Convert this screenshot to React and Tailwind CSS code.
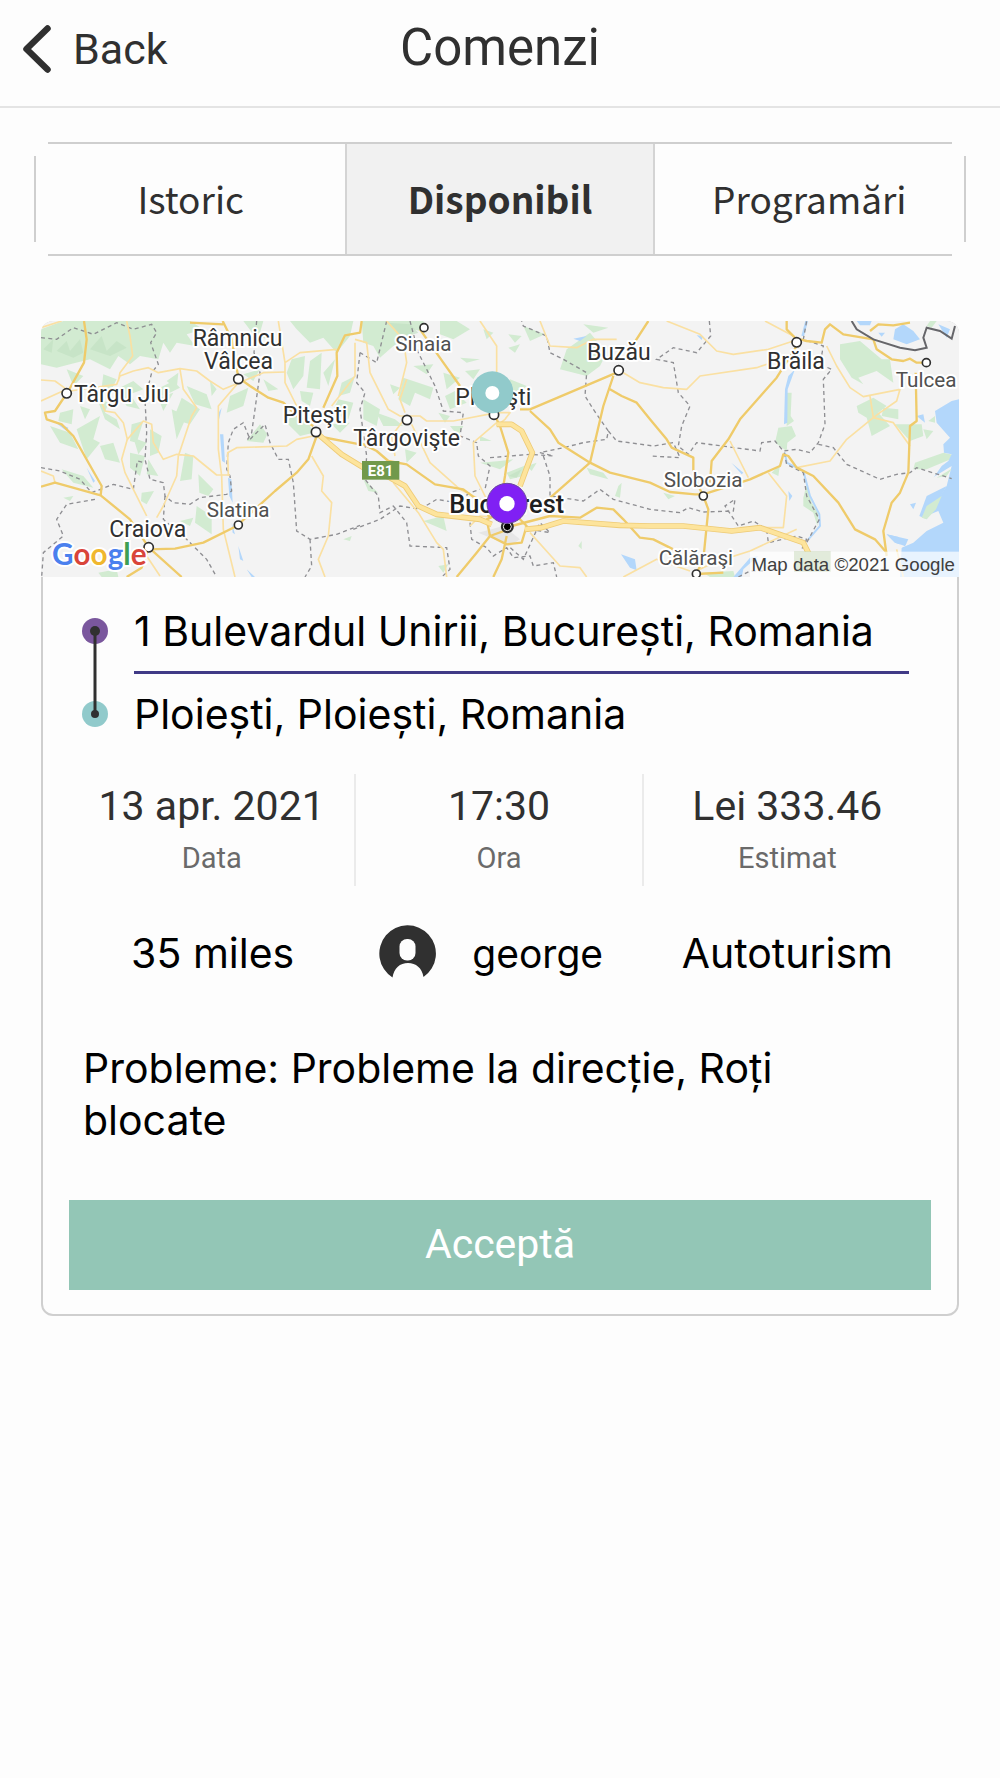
/* src/pages/OrdersPage.jsx */
import { useState } from 'react'

const tabs = ['Istoric', 'Disponibil', 'Programări']

const order = {
  from: '1 Bulevardul Unirii, București, Romania',
  to: 'Ploiești, Ploiești, Romania',
  stats: [
    { value: '13 apr. 2021', label: 'Data' },
    { value: '17:30', label: 'Ora' },
    { value: 'Lei 333.46', label: 'Estimat' },
  ],
  distance: '35 miles',
  client: 'george',
  vehicle: 'Autoturism',
  problems: 'Probleme la direcție, Roți blocate',
}

// x, y is the left baseline of the label, cx, cy the city dot
const cities = [
  { name: 'Râmnicu', x: 488, y: 109 },
  { name: 'Vâlcea', x: 522, y: 179, cx: 625, cy: 209 },
  { name: 'Târgu Jiu', x: 132, y: 278, cx: 110, cy: 252 },
  { name: 'Piteşti', x: 758, y: 340, cx: 858, cy: 368 },
  { name: 'Craiova', x: 238, y: 684, cx: 356, cy: 714 },
  { name: 'Slatina', x: 530, y: 622, cx: 625, cy: 647, small: true },
  { name: 'Sinaia', x: 1096, y: 126, cx: 1182, cy: 55, small: true },
  { name: 'Târgovişte', x: 970, y: 411, cx: 1131, cy: 332 },
  { name: 'Ploieşti', x: 1276, y: 286, cx: 1392, cy: 316 },
  { name: 'Buzău', x: 1671, y: 153, cx: 1766, cy: 183 },
  { name: 'Brăila', x: 2211, y: 178, cx: 2300, cy: 99 },
  { name: 'Tulcea', x: 2597, y: 232, cx: 2689, cy: 160, small: true },
  { name: 'Slobozia', x: 1901, y: 533, cx: 2020, cy: 560, small: true },
  { name: 'Călăraşi', x: 1886, y: 767, cx: 1999, cy: 794, small: true },
]

const BackIcon = () => (
  <svg viewBox="0 0 28 48" className="h-12 w-7" fill="none" stroke="#303030" strokeWidth="6.500" strokeLinecap="round" strokeLinejoin="round" aria-hidden="true">
    <path d="M24.500 3.500L3.500 24l21 20.500" />
  </svg>
)

const UserIcon = () => (
  <svg viewBox="0 0 57 54" className="h-[54px] w-[57px] mb-1 shrink-0" aria-hidden="true">
    <path fill="#303030" d="M13.500 52.500A28.300 28.300 0 1 1 44.500 52C43 43 37 38 29 38S15 43 13.500 52.500Z" />
    <rect x="20.500" y="14" width="16" height="21.500" rx="7.500" fill="#fdfdfd" />
  </svg>
)

const RouteMap = () => (
  <svg viewBox="33 35 2754 768" className="block w-full rounded-t-xl" role="img" aria-label="Bucharest - Ploieşti" fontFamily="Roboto, sans-serif">
    <rect x="33" y="35" width="2754" height="768" fill="#f3f3f3" />

    {/* forests */}
    <g fill="#d2ebd1">
      <path d="M33 60L100 35H480L520 60L470 75L495 110L440 100L420 130L400 100L385 150L330 140L300 165L265 140L240 180L180 150L120 165L80 175L33 165Z" />
      <path d="M640 35H700L690 70L740 100L670 75ZM780 35H970L960 80L920 130L880 85L840 100L800 60Z" />
      <path d="M110 180L160 200L130 230ZM220 195L260 210L240 250L215 235ZM260 240L310 215L340 240L300 255L330 300L290 290ZM370 245L430 215L450 235L400 260ZM410 215L445 190L440 240ZM385 265L430 250L400 305ZM470 230L530 255L545 300L495 285ZM455 265L510 300L480 345L430 330ZM425 300L470 320L440 390ZM540 215L560 240L545 260Z" />
      <path d="M90 310L130 300L125 345L85 335ZM60 350L120 370L145 420L90 400ZM140 360L210 320L190 390L210 400L170 450ZM150 290L180 300L165 330ZM200 265L235 280L225 310L260 330L270 360L225 330ZM210 410L250 400L270 460L225 450ZM305 345L340 335L320 400L300 395ZM360 360L395 380L385 430L360 440ZM300 430L345 440L330 500L300 475ZM310 385L350 400L325 435ZM465 430L490 440L485 510L450 515ZM355 450L385 500L350 495Z" />
      <path d="M95 480L160 500L190 535L130 520ZM100 565L130 560L120 575ZM335 550L372 545L350 585L333 575ZM505 495L550 540L535 560L508 550ZM500 590L545 620L545 675L495 640ZM450 635L490 625L480 650ZM205 790L260 780L265 803H215ZM940 690L965 680L960 695Z" />
      <path d="M600 260L655 235L640 290L590 310ZM640 195L690 180L670 215ZM700 210L745 240L715 245ZM690 345L712 375L700 400L650 395ZM785 150L825 140L820 200L790 240L770 190ZM840 155L875 130L870 240L830 235ZM880 190L915 150L895 230ZM810 245L850 250L840 290L815 275ZM790 310L830 330L850 370L810 380L770 340ZM935 220L975 200L960 250L925 260ZM925 270L970 280L955 330L905 310ZM905 345L960 340L930 370Z" />
      <path d="M995 35H1180L1190 70L1150 60L1140 100L1090 110L1050 145L1030 110L1000 100ZM1230 35H1280L1320 60L1270 90L1230 75ZM1150 170L1210 165L1190 195ZM1290 145L1350 150L1310 160ZM1360 60L1390 70L1370 90ZM1435 75L1475 80L1455 100ZM1435 115L1470 105L1455 130ZM1480 50L1545 75L1500 95Z" />
      <path d="M1120 205L1210 235L1200 270L1155 250L1140 290L1105 270ZM1080 225L1110 235L1090 255ZM1000 270L1050 300L1040 350L1000 330ZM1040 310L1095 330L1120 350L1060 350ZM1240 190L1290 205L1250 240ZM1245 260L1275 245L1310 280L1260 300ZM1225 310L1260 320L1245 340ZM1260 350L1300 350L1285 380ZM1125 420L1160 430L1130 460ZM1350 380L1385 395L1350 395ZM1440 210L1490 230L1470 250L1430 240ZM1305 185L1350 180L1330 210Z" />
      <path d="M1610 120L1680 70L1730 130L1710 170L1670 200L1590 180ZM1660 45L1735 55L1690 70ZM1350 460L1410 455L1450 450L1410 480L1380 470ZM1430 490L1495 465L1480 500L1440 510ZM1490 470L1520 460L1505 485ZM1670 475L1720 490L1735 510L1680 495ZM1765 530L1775 520L1770 565L1755 560ZM1645 710L1655 695L1655 720ZM1180 635L1240 620L1250 665ZM1225 770L1255 765L1240 790ZM1000 510L1045 550L1015 545Z" />
      <path d="M2430 105L2490 95L2555 150L2580 150L2590 220L2540 185L2485 205L2500 225L2465 205L2430 150ZM2480 290L2530 265L2570 290L2545 310L2580 350L2525 380L2510 325L2485 310ZM2560 295L2605 300L2605 330L2555 320ZM2595 345L2675 345L2680 380L2640 395ZM2680 360L2710 365L2690 390ZM2695 335L2715 320L2715 340ZM2270 250H2285L2282 320L2292 335L2270 350ZM2245 355L2285 350L2298 380L2272 400L2270 425L2235 400ZM2225 490L2250 465L2245 500ZM2320 565L2330 525L2345 580L2365 610L2362 650L2350 610L2320 590ZM2655 460L2740 430L2785 440L2690 480L2650 480ZM1900 550L1935 560L1915 570ZM2020 790L2110 785L2115 803H2040ZM2700 35H2720L2705 55L2690 50Z" />
    </g>
    <g fill="#bfe0bf">
      <path d="M80 125L110 95L120 125L150 90L160 130L130 145ZM180 120L215 80L230 125L260 95L290 115L240 140ZM40 120L70 90L65 130ZM1070 40L1140 45L1165 70L1120 85ZM1435 500L1475 480L1460 505Z" opacity=".6" />
    </g>

    {/* water */}
    <g fill="#b3d7fb">
      <path d="M2787 270L2765 275L2715 305L2720 340L2760 385L2740 405L2742 430L2765 435L2755 455L2735 470L2700 520L2670 600L2675 625L2725 605L2740 640L2690 665L2650 700L2615 715L2610 803H2787Z" />
      <path d="M2480 35H2525L2520 48H2490ZM2595 60L2620 45L2650 65L2670 90L2630 105L2590 90ZM2545 70L2565 70L2555 82ZM2725 45L2760 60L2750 85ZM2660 320L2680 315L2685 340ZM2570 675L2635 690L2625 710L2595 700ZM2640 585L2658 580L2650 600ZM2295 180L2275 200L2265 240L2262 345L2272 340L2273 240ZM2275 545L2287 560L2278 575ZM2110 803L2160 745L2185 740L2140 780L2135 803ZM1773 735L1815 750L1820 783L1800 775Z" />
      <path d="M575 295L566 310L565 340ZM570 375L580 375L585 460L576 455ZM594 505L604 510L608 580L598 560ZM605 640L615 675L608 670ZM625 710L640 755L630 750ZM2104 460L2140 490L2135 495ZM2000 78L2020 80L2015 92ZM1630 88L1670 80L1650 95ZM650 780L675 803H665ZM70 335L115 355L110 365ZM170 475L195 515L190 520Z" />
      <path d="M2265 430L2270 460L2320 485L2340 560L2368 615L2370 650L2335 690" fill="none" stroke="#b3d7fb" strokeWidth="6" />
      <path d="M2330 35L2318 80" fill="none" stroke="#b3d7fb" strokeWidth="8" />
    </g>
    {/* delta gap between the lagoon and the sea */}
    <path d="M2640 550L2700 510L2765 470L2750 530L2680 640L2700 655L2640 690L2610 720L2600 620Z" fill="#f3f3f3" />
    <path d="M2750 530L2722 580L2690 630L2668 620L2690 560Z" fill="#b3d7fb" />
    <path d="M2675 625L2690 590L2735 560L2718 600L2690 630ZM2720 505L2765 478L2750 500Z" fill="#d2ebd1" />
    <path d="M2640 585L2658 580L2650 600ZM2570 675L2635 690L2625 710L2595 700Z" fill="#b3d7fb" />
    <path d="M1345 670L1420 650L1470 690L1440 710Z" fill="#e6e6e6" />

    {/* county borders */}
    <g fill="none" stroke="#8e8e92" strokeWidth="4" strokeDasharray="12 10">
      <path d="M33 85L80 90L130 55L190 75L260 40L310 60L365 45L380 70L362 100L385 165L365 190L345 270L350 370L345 450L360 510L400 520L405 560L430 580L480 585L510 565L590 555L605 545L600 500L590 480L595 400L610 360L640 340L660 390L705 345L720 400L745 450H775L790 520L800 665L840 690L920 675L990 648" />
      <path d="M33 475L90 485L150 510L185 550L250 525L310 540L322 455L345 460M195 570L110 585L80 630L100 680L40 730L35 803M405 560L400 630L470 690L530 750L560 803M840 690L845 770L825 803M680 35L672 130L690 190L675 300L665 370L650 395M990 130L980 220L1005 250L990 300L1010 440L1005 510L1045 560L1050 610L1090 590L1130 640L1140 710L1250 715L1260 780L1235 803" />
      <path d="M1070 35L1040 160L990 130M1140 35L1165 130L1215 230L1240 305L1300 310L1290 380L1340 400L1345 440L1380 470L1365 540M1380 445L1500 435L1570 440L1530 430L1600 415L1660 400L1730 390L1735 365L1690 300L1665 260L1670 190L1600 150L1560 130L1550 80L1480 50L1475 35" />
      <path d="M1735 365L1760 395L1870 410L1930 400L1950 445L1860 440M1540 440L1560 500L1560 560L1660 575L1710 540L1750 570L1860 600L1950 610L1975 595L2020 608L2110 605L2115 570L2085 590L2125 650L2170 635L2210 660L2215 700L2300 680L2330 690L2315 720" />
      <path d="M2038 35L2042 80L2000 130L1930 115L1880 150L1930 160L1945 250L1980 290L1955 350L1945 410L1975 435L2000 400L2190 425L2195 400L2235 395L2260 425L2300 420L2340 430L2365 400L2385 345L2380 210L2405 180L2370 165L2380 110L2320 90L2330 35" />
      <path d="M2365 405L2410 415L2450 465L2550 510L2600 495L2640 490L2660 475L2765 508M2263 430L2270 465L2320 490L2330 560L2368 630L2330 700M970 660L1050 630L1110 590L1170 600L1220 570L1280 580L1320 550L1350 540M1320 640L1325 690L1370 715L1390 740L1430 715L1450 745L1500 740L1510 770L1570 760L1580 803M1500 660L1560 670L1530 640L1480 750L1435 710M2125 803L2160 785H2200" />
    </g>

    {/* minor roads */}
    <g fill="none" stroke="#fae0a2" strokeWidth="5" strokeLinejoin="round">
      <path d="M33 55L95 35M33 212L75 215L110 240L33 275M120 245L260 225L270 200L310 185L355 175L385 190L450 178L500 185L540 215L580 240L640 215L700 190L765 188M290 35L300 80L308 140L270 190L265 215M215 280L225 305L255 310L280 340L292 390L340 335L365 345L370 400L400 450L440 435L490 440L560 497H600M450 180L460 240L500 295L485 320L445 440L440 500L400 590L380 625" />
      <path d="M292 390L275 450L285 490L350 620M625 220L565 290L565 420L575 500L580 660L615 803M595 500L593 430L620 415L770 410L800 390L850 380M745 35L765 160L765 220L800 290L810 325M765 160L810 130L920 120M845 440L880 500L875 545L905 580L895 680L865 750L885 803M975 100V200L905 290M350 740L390 800M33 485L70 500L75 520" />
      <path d="M975 90L1010 100L1020 190L1075 300L1110 320L1170 320L1190 335L1270 335L1400 310L1440 310L1425 330L1400 350M1130 210L1110 270L1125 310M1070 35L1120 90L1130 160L1105 260M1400 340L1330 400L1335 500L1370 570M1130 320L1085 380L1095 440M1350 35L1400 110L1400 190M1145 345L1200 460L1290 540L1370 580M1090 520L1165 610L1220 700L1240 720L1250 803" />
      <path d="M1530 35L1560 110L1640 115L1690 90H1760M1780 190L1830 220L1900 235L1970 240L2010 200L2180 175L2240 155M1910 35L2010 75L2060 125L2110 135L2215 120L2290 95M1500 670L1590 770L1650 775L1670 803M2205 35L2290 80M2390 110L2420 170L2460 235L2500 262L2610 240L2600 275L2550 310L2530 325L2520 260M2300 475L2400 455L2450 390L2530 325L2590 340L2640 410M2100 395L2155 505M2215 490L2270 560L2260 655H2130M2300 660L2160 725L2050 760L2010 780M2600 720L2620 803M1320 650L1350 620L1400 625M1780 803L1880 750L1980 785" />
    </g>

    {/* main roads */}
    <g fill="none" stroke="#efcb6a" strokeWidth="7" strokeLinejoin="round">
      <path d="M162 35L170 90L162 160L115 245L75 305L45 310L50 330L95 345L130 380L215 530L212 558L75 520L33 532M212 558L300 630L356 714L455 803M356 714L335 775L290 803M356 720L435 718L520 700L620 650L735 545L800 490L835 450L860 380L990 405M578 35L605 90L625 205L660 230L715 265L760 280L800 320L850 350M480 40L580 45M990 70L945 78L920 130L922 200L880 295" />
      <path d="M990 72L995 35M990 400L1040 425L1075 455L1130 465L1215 525L1300 540L1340 570L1380 625M1170 60L1240 160L1290 230M1390 310L1410 350L1435 430L1425 500L1420 530M1470 300L1500 300L1760 190M1805 150L1800 120L1855 35M1500 305L1560 360L1585 400L1680 460L1740 490L1860 520L1920 548L1995 555L2020 555L2160 510L2250 470L2260 435L2275 440L2300 475L2350 500L2425 580L2475 660L2535 690L2570 730" />
      <path d="M1750 200L1720 290L1680 460L1555 570M1740 240L1775 260L1820 280L1860 330L1910 390L1925 415L1990 445V500L2020 560L2035 600L2020 750L1999 794M2300 110L2240 205L2130 330L2095 390L2045 455L2040 520M2300 90L2270 60V35M2310 90L2330 95L2375 100L2385 60L2400 45L2440 75L2530 90L2540 120L2585 150L2620 155L2640 148L2660 160H2685M2657 190L2660 335L2640 350L2635 490L2610 550L2585 580L2560 665L2570 740" />
      <path d="M1380 680L1340 730L1280 803M1430 680L1415 750L1390 803M1445 650L1560 620L1650 625L1700 595L1750 600L1780 630L1830 685L1870 690L1930 720M1435 660L1380 680L1430 705L1475 700L1490 650L1440 600L1370 630L1380 680M2520 65L2545 45L2590 48L2640 40M1999 794L2080 790" />
    </g>
    <g fill="none" stroke="#eecb76" strokeWidth="17" strokeLinejoin="round">
      <path d="M865 375L935 435L1000 475L1080 505L1125 530L1165 590L1220 615L1350 630L1385 645M1485 660L1535 655L1600 635L1770 648L1860 650L1960 650L2105 665L2190 655L2320 700L2340 740M1400 345L1445 345L1475 365L1507 430L1470 530" />
    </g>
    <path fill="none" stroke="#fde49c" strokeWidth="12" strokeLinejoin="round" d="M865 375L935 435L1000 475L1080 505L1125 530L1165 590L1220 615L1350 630L1385 645M1485 660L1535 655L1600 635L1770 648L1860 650L1960 650L2105 665L2190 655L2320 700L2340 740M1400 345L1445 345L1475 365L1507 430L1470 530" />

    {/* state border */}
    <path d="M2465 35L2480 60L2530 90L2610 115L2655 123L2690 115L2680 85L2690 55L2730 65L2765 88L2775 50" fill="none" stroke="#66666a" strokeWidth="6" />

    {/* city dots and labels */}
    <g fill="#fff" stroke="#303030" strokeWidth="5">
      {cities.filter(c => c.cx).map(c => (
        <circle key={c.name} cx={c.cx} cy={c.cy} r={c.small ? 12 : 14} />
      ))}
      <circle cx="1432" cy="652" r="17" fill="#000" />
      <circle cx="1432" cy="652" r="12" fill="none" stroke="#fff" strokeWidth="3" />
    </g>
    <g stroke="#fff" strokeWidth="12" strokeLinejoin="round" paintOrder="stroke">
      {cities.map(c => (
        <text key={c.name} x={c.x} y={c.y} fontSize={c.small ? 62 : 69} fill={c.small ? '#505050' : '#303030'}>{c.name}</text>
      ))}
      <text x="1258" y="612" fontSize="76" fontWeight="500" fill="#202020">Bucharest</text>
    </g>

    <rect x="996" y="455" width="112" height="56" fill="#71994b" />
    <text x="1052" y="500" fontSize="45" fontWeight="700" textAnchor="middle" fill="#fff">E81</text>

    {/* pins */}
    <circle cx="1387" cy="249" r="63" fill="#91cacb" />
    <circle cx="1387" cy="251" r="21" fill="#fff" />
    <circle cx="1431" cy="582" r="60" fill="#8020f4" stroke="#6a4a9c" strokeWidth="3" />
    <circle cx="1431" cy="583" r="23" fill="#fff" />

    {/* attribution */}
    <text x="66" y="767" fontSize="89" fontFamily="Lato, sans-serif" fontWeight="700" stroke="#fff" strokeWidth="12" paintOrder="stroke">
      <tspan fill="#4a80ee">G</tspan><tspan fill="#d9453a">o</tspan><tspan fill="#f0b72f">o</tspan><tspan fill="#4a80ee">g</tspan><tspan fill="#3f9f52">l</tspan><tspan fill="#d9453a">e</tspan>
    </text>
    <rect x="2292" y="727" width="110" height="60" fill="#9fbd85" />
    <rect x="2160" y="727" width="627" height="76" fill="#fff" fillOpacity=".7" />
    <text x="2775" y="786" fontSize="56" fontFamily="Liberation Sans, sans-serif" textAnchor="end" fill="#404040">Map data ©2021 Google</text>
  </svg>
)

export default function OrdersPage() {
  const [activeTab, setActiveTab] = useState('Disponibil')

  return (
    <div className="min-h-screen bg-[#fdfdfd] font-[Roboto,sans-serif] text-[#303030]">
      <header className="grid grid-cols-3 items-center h-[108px] pb-3 border-b-2 border-[#e4e4e4]">
        <button type="button" className="flex items-center gap-[22px] pl-[23px] pt-1 text-[43px] leading-none">
          <BackIcon />
          Back
        </button>
        <h1 className="text-center text-[51px] leading-none">Comenzi</h1>
      </header>

      <main>
        <div className="relative mx-[34px] mt-[34px] grid grid-cols-3 h-[114px] border-2 border-[#cfcfcf] font-['Noto_Sans_CJK_JP',sans-serif] text-[37px]" role="tablist">
          {tabs.map(tab => (
            <button
              key={tab}
              type="button"
              role="tab"
              aria-selected={activeTab === tab}
              onClick={() => setActiveTab(tab)}
              className={activeTab === tab ? 'bg-[#f1f1f1] font-bold border-x-2 border-[#d4d4d4]' : ''}
            >
              {tab}
            </button>
          ))}
          {/* open corners */}
          <span className="absolute -left-1 -top-1 size-4 bg-[#fdfdfd] rounded-br-lg" />
          <span className="absolute -right-1 -top-1 size-4 bg-[#fdfdfd] rounded-bl-lg" />
          <span className="absolute -left-1 -bottom-1 size-4 bg-[#fdfdfd] rounded-tr-lg" />
          <span className="absolute -right-1 -bottom-1 size-4 bg-[#fdfdfd] rounded-tl-lg" />
        </div>

        <article className="mx-[41px] mt-[65px] border-2 border-[#cfcfcf] rounded-xl font-[Inter,sans-serif] text-[41px] text-black">
          <div className="-mx-[2px] -mt-[2px]">
            <RouteMap />
          </div>

          <div className="flex pt-[14px] pl-[38px] pr-12">
            <svg viewBox="0 0 28 163" className="w-7 h-[163px] mr-[25px] shrink-0" aria-hidden="true">
              <circle cx="14" cy="40" r="13" fill="#7a579d" />
              <circle cx="14" cy="123" r="13" fill="#91cacb" />
              <path d="M14 40V123" stroke="#303030" strokeWidth="3" />
              <circle cx="14" cy="40" r="5" fill="#303030" />
              <circle cx="14" cy="123" r="4" fill="#303030" />
            </svg>
            <div className="flex-1 leading-[80px]">
              <p className="border-b-3 border-[#403a86]">{order.from}</p>
              <p>{order.to}</p>
            </div>
          </div>

          <dl className="mt-5 mx-[26px] grid grid-cols-3 divide-x-2 divide-[#ebebeb] text-center font-[Roboto,sans-serif]">
            {order.stats.map(stat => (
              <div key={stat.label} className="flex flex-col-reverse h-28 pt-2 pb-2 gap-2">
                <dt className="text-[29px] leading-10 text-[#6a6a6a]">{stat.label}</dt>
                <dd className="text-[41px] leading-[48px] text-[#303030]">{stat.value}</dd>
              </div>
            ))}
          </dl>

          <div className="mt-7 mx-[26px] h-20 grid grid-cols-3 items-center text-center">
            <p>{order.distance}</p>
            <div className="flex items-center gap-9 pl-[23px]">
              <UserIcon />
              <p className="text-[39px]">{order.client}</p>
            </div>
            <p>{order.vehicle}</p>
          </div>

          <p className="mt-12 px-10 leading-[52px]">Probleme: {order.problems}</p>

          <div className="mt-[54px] px-[26px] pb-6">
            <button type="button" className="w-full h-[90px] bg-[#93c6b6] font-[Roboto,sans-serif] text-[41px] text-white">Acceptă</button>
          </div>
        </article>
      </main>
    </div>
  )
}
